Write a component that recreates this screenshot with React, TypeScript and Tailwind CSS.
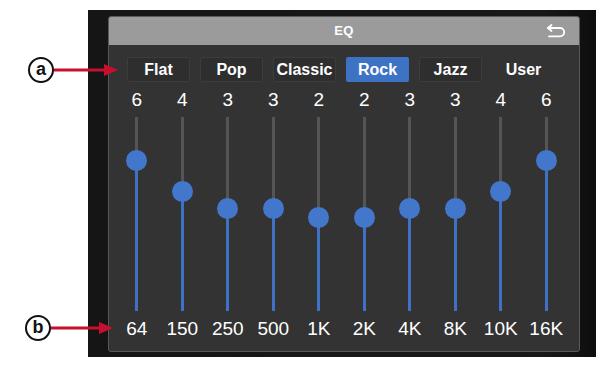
const presets = ["Flat", "Pop", "Classic", "Rock", "Jazz", "User"];

const bands = [
  { label: "64", value: 6 },
  { label: "150", value: 4 },
  { label: "250", value: 3 },
  { label: "500", value: 3 },
  { label: "1K", value: 2 },
  { label: "2K", value: 2 },
  { label: "4K", value: 3 },
  { label: "8K", value: 3 },
  { label: "10K", value: 4 },
  { label: "16K", value: 6 },
];

// knob centre measured from track top (track is 194px tall)
const knobTop: Record<number, number> = { 6: 43, 4: 74, 3: 91, 2: 100 };

function Callout({ letter, width }: { letter: string; width: number }) {
  return (
    <div className="flex items-center">
      <div className="flex h-[26px] w-[26px] items-center justify-center rounded-full border-[2.5px] border-[#111] bg-white text-[18px] font-bold leading-none text-[#111]">
        <span className="-mt-[2px]">{letter}</span>
      </div>
      <svg width={width} height="14" viewBox={`0 0 ${width} 14`} className="block">
        <line x1="0" y1="7" x2={width - 12} y2="7" stroke="#c8102e" strokeWidth="3" />
        <polygon points={`${width - 14},1 ${width},7 ${width - 14},13`} fill="#c8102e" />
      </svg>
    </div>
  );
}

function BackIcon() {
  return (
    <svg width="22" height="14" viewBox="0 0 22 14" fill="none" stroke="white" strokeWidth="1.8" strokeLinecap="round" strokeLinejoin="round">
      <path d="M3 4 H15 a4.2 4.2 0 0 1 0 8.4 H4" />
      <path d="M6.5 1 L3 4 L6.5 7" />
    </svg>
  );
}

export default function App() {
  return (
    <div
      className="relative h-[368px] w-[606px] overflow-hidden bg-white"
      style={{ fontFamily: '"Liberation Sans", Arial, sans-serif' }}
    >
      {/* Device frame */}
      <div className="ml-[88px] mt-[10px] h-[347px] w-[508px] bg-[linear-gradient(90deg,#151515_0%,#181818_90%,#0d0d0d_100%)] pb-[5px] pl-[20px] pr-[16px] pt-[6px]">
        <div className="flex h-[336px] w-[472px] flex-col overflow-hidden rounded-[3px] border border-[#585858] bg-[#333333]">
          {/* Header */}
          <div className="relative flex h-[28px] shrink-0 items-center justify-center bg-[#9b9b9b]">
            <span className="text-[13px] font-bold tracking-wide text-white">EQ</span>
            <div className="absolute right-[12px] top-[7px]">
              <BackIcon />
            </div>
          </div>

          {/* Presets */}
          <div className="ml-[18px] mt-[12px] flex gap-[10px]">
            {presets.map((p) => (
              <div
                key={p}
                className={
                  p === "Rock"
                    ? "flex h-[25px] w-[63px] items-center justify-center rounded-[2px] bg-[#3d72c5] text-[16px] font-bold text-white"
                    : p === "User"
                      ? "flex h-[25px] w-[63px] items-center justify-center text-[16px] font-bold text-white"
                      : "flex h-[25px] w-[63px] items-center justify-center rounded-[2px] border border-[#3c3c3c] bg-[#2e2e2e] text-[16px] font-bold text-white"
                }
              >
                {p}
              </div>
            ))}
          </div>

          {/* Sliders */}
          <div className="ml-[5px] mt-[8px] grid w-[455px] grid-cols-10">
            {bands.map((b) => (
              <div key={b.label} className="flex flex-col items-center">
                <div className="h-[20px] text-[19px] leading-[20px] text-white">{b.value}</div>
                <div className="relative mt-[7px] h-[194px] w-[21px]">
                  <div className="absolute bottom-0 left-[9px] top-0 w-[3px] bg-[#555555]" />
                  <div
                    className="absolute bottom-0 left-[9px] w-[3px] bg-[#3d72c5]"
                    style={{ top: knobTop[b.value] }}
                  />
                  <div
                    className="absolute left-0 h-[21px] w-[21px] rounded-full bg-[#4277cc]"
                    style={{ top: knobTop[b.value] - 10 }}
                  />
                </div>
                <div className="mt-[8px] text-[19px] leading-[20px] text-white">{b.label}</div>
              </div>
            ))}
          </div>
        </div>
      </div>

      {/* Callouts */}
      <div className="absolute left-[28px] top-[57px]">
        <Callout letter="a" width={64} />
      </div>
      <div className="absolute left-[25px] top-[315px]">
        <Callout letter="b" width={62} />
      </div>
    </div>
  );
}
